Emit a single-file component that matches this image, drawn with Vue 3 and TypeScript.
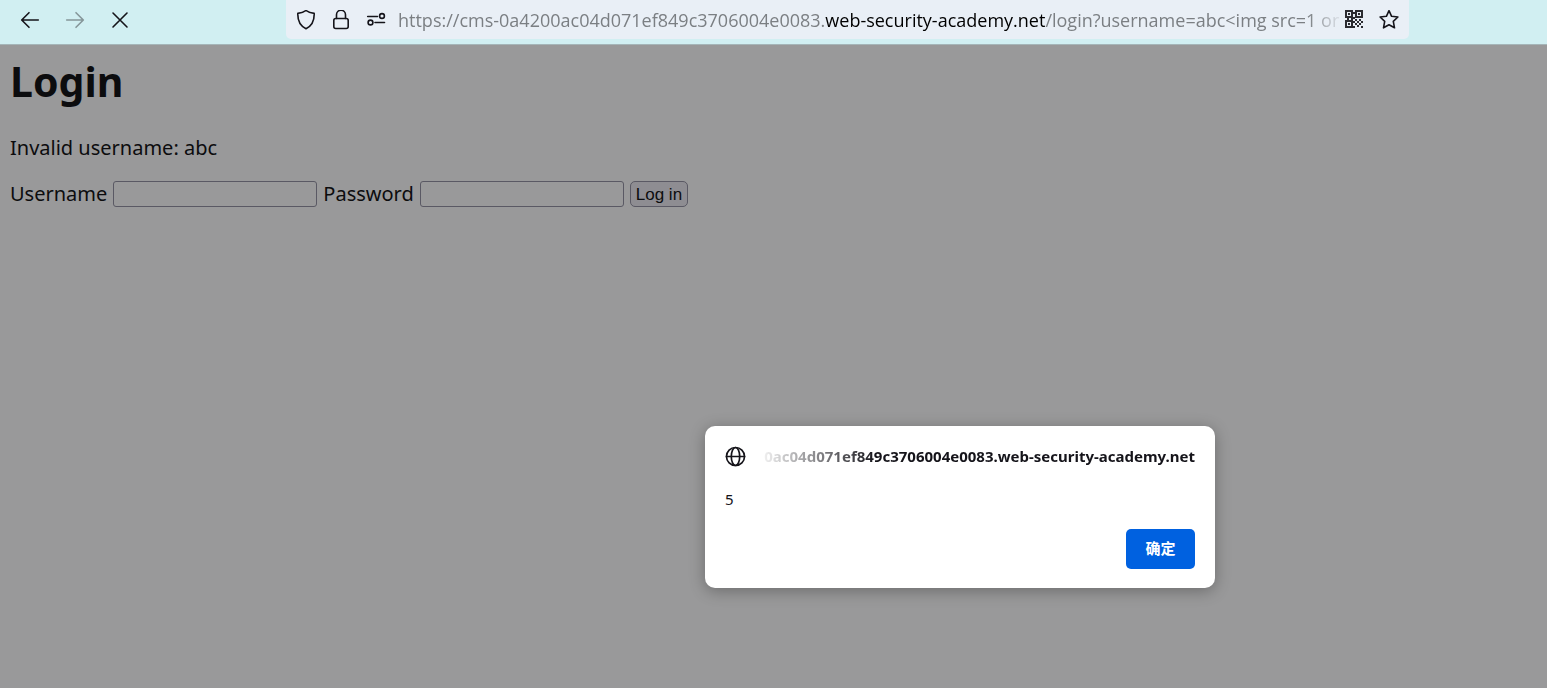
<script setup lang="ts">
import { ref } from 'vue'

const username = ref('')
const password = ref('')
const host = 'web-security-academy.net'
const subdomain = 'cms-0a4200ac04d071ef849c3706004e0083.'
const dialogOrigin = '0ac04d071ef849c3706004e0083.web-security-academy.net'
</script>

<template>
  <div class="browser">
    <header class="toolbar">
      <nav class="nav" aria-label="Navigation">
        <button type="button" aria-label="Back">
          <svg viewBox="0 0 20 20"><path d="M18.300 10H1.800M9 2.700 1.700 10 9 17.300" /></svg>
        </button>
        <button type="button" aria-label="Forward" disabled>
          <svg viewBox="0 0 20 20"><path d="M1.700 10H18.200M11 2.700 18.300 10 11 17.300" /></svg>
        </button>
        <button type="button" aria-label="Stop">
          <svg viewBox="0 0 20 20"><path d="M3 3 17 17M17 3 3 17" /></svg>
        </button>
      </nav>
      <div class="urlbar">
        <button type="button" aria-label="Tracking protection">
          <svg viewBox="0 0 20 20"><path d="M10 .5C12 2.100 15 3.200 18.200 3.400 18.400 10.100 16.500 15.600 10 18.700 3.500 15.600 1.600 10.100 1.800 3.400 5 3.200 8 2.100 10 .5Z" /></svg>
        </button>
        <button type="button" aria-label="Connection security">
          <svg viewBox="0 0 20 20"><rect x="2.800" y="8.500" width="14.400" height="10" rx="2" /><path d="M5.500 8.500V4.700a4.500 4.500 0 0 1 9 0v3.800" /></svg>
        </button>
        <button type="button" aria-label="Permissions">
          <svg viewBox="0 0 20 20"><circle cx="16" cy="6" r="2.400" /><circle cx="4.500" cy="12.500" r="2.400" /><path d="M1.700 6.500H11.500M9 12.500H18.500" /></svg>
        </button>
        <div class="address">https://{{ subdomain }}<span class="host">{{ host }}</span>/login?username=abc&lt;img src=1 or</div>
        <button type="button" aria-label="QR code">
          <svg class="solid" viewBox="0 0 20 20">
            <path fill-rule="evenodd" d="M1 0h8v8H1ZM3 2v4h4V2ZM11 0h8v8h-8ZM13 2v4h4V2ZM1 10h8v8H1ZM3 12v4h4v-4Z" />
            <path d="M4 3h2v2H4ZM14 3h2v2h-2ZM4 13h2v2H4ZM9 2h2v2H9ZM9 7h2v2H9ZM3 8h2v2H3ZM7 8h2v2H7ZM11 9h2v2h-2ZM15 9h2v2h-2ZM9 11h2v2H9ZM13 11h2v2h-2ZM17 11h2v2h-2ZM11 13h2v2h-2ZM15 13h2v2h-2ZM9 16h2v2H9ZM13 15h2v2h-2ZM17 16h2v2h-2Z" />
          </svg>
        </button>
        <button type="button" aria-label="Bookmark this page">
          <svg viewBox="0 0 20 20"><path d="M10 .7 12.600 6.300 18.900 7 14.300 11.300 15.500 17.800 10 14.700 4.500 17.800 5.700 11.300 1.100 7 7.400 6.300Z" /></svg>
        </button>
      </div>
    </header>

    <main class="page">
      <h1>Login</h1>
      <p>Invalid username: abc</p>
      <form @submit.prevent>
        <label for="username">Username</label>
        <input id="username" v-model="username" type="text" />
        <label for="password">Password</label>
        <input id="password" v-model="password" type="password" />
        <button type="submit">Log in</button>
      </form>
    </main>

    <section class="dialog" role="alertdialog" aria-labelledby="origin" aria-describedby="message">
      <div class="title">
        <svg viewBox="0 0 20 20"><circle cx="10" cy="10" r="8.600" /><ellipse cx="10" cy="10" rx="4" ry="8.600" /><path d="M1.400 10H18.600" /></svg>
        <div id="origin" class="origin">{{ dialogOrigin }}</div>
      </div>
      <p id="message">5</p>
      <button type="button">确定</button>
    </section>
  </div>
</template>

<style>
body {
  margin: 0;
}
</style>

<style scoped>
.browser {
  position: relative;
  display: flex;
  flex-direction: column;
  min-height: 100vh;
  background: #99999a;
  font-family: "Noto Sans", "Noto Sans CJK SC", sans-serif;
}

button {
  font-family: inherit;
}

svg {
  display: block;
  flex: none;
  width: 20px;
  height: 20px;
  fill: none;
  stroke: currentColor;
  stroke-width: 1.6;
  stroke-linecap: round;
  stroke-linejoin: round;
}

.solid {
  fill: #2b2b30;
  stroke: none;
}

.toolbar {
  display: flex;
  height: 44px;
  padding-right: 138px;
  border-bottom: 1px solid #a5b5b8;
  background: #d1eff2;
}

.nav {
  display: flex;
  flex: none;
  align-items: center;
  gap: 25px;
  box-sizing: border-box;
  width: 286px;
  height: 39px;
  padding-left: 20px;
}

.toolbar button {
  flex: none;
  padding: 0;
  border: 0;
  background: none;
  color: #15141a;
}

.toolbar button:disabled {
  color: #859699;
}

.urlbar {
  display: flex;
  flex: 1;
  align-items: center;
  gap: 15px;
  min-width: 0;
  height: 39px;
  padding: 0 10px;
  box-sizing: border-box;
  border-radius: 0 0 5px 5px;
  background: #e9eff6;
}

.address {
  flex: 1;
  min-width: 0;
  margin: 0 -15px 0 -3px;
  overflow: hidden;
  color: #7b7f83;
  font-family: "Open Sans", "Noto Sans", sans-serif;
  font-size: 18px;
  line-height: 38px;
  white-space: nowrap;
  mask-image: linear-gradient(to left, transparent, #000 36px);
}

.toolbar .address + button {
  margin-left: 0;
}

.host {
  color: #000;
}

.page {
  padding: 6px 10px;
  color: #0c0c0e;
  font-size: 20px;
  line-height: 28px;
}

h1 {
  margin: 0 0 23px;
  font-size: 41px;
  line-height: 60px;
}

p {
  margin: 0;
}

form {
  display: flex;
  flex-wrap: wrap;
  align-items: center;
  gap: 6px;
  margin-top: 18px;
}

form input {
  box-sizing: border-box;
  width: 204px;
  height: 26px;
  padding: 2px 4px;
  border: 1px solid #5a5964;
  border-radius: 3px;
  background: #99999a;
  font-size: 17px;
}

form button {
  height: 26px;
  padding: 2px 5px 0;
  border: 1px solid #5a5964;
  border-radius: 5px;
  background: #8e8d92;
  color: #0c0c0e;
  font-family: "Liberation Sans", sans-serif;
  font-size: 17px;
}

.dialog {
  position: absolute;
  top: 426px;
  right: 332px;
  display: flex;
  flex-direction: column;
  box-sizing: border-box;
  width: 510px;
  padding: 20px 20px 19px;
  border-radius: 10px;
  background: #fff;
  box-shadow: 0 3px 16px rgba(0, 0, 0, 0.3);
  color: #15141a;
  font-size: 15px;
  line-height: 22px;
}

.title {
  display: flex;
  align-items: center;
  gap: 10px;
  line-height: 21px;
}

.title svg {
  width: 21px;
  height: 21px;
}

.origin {
  display: flex;
  flex: 1;
  justify-content: flex-end;
  min-width: 0;
  overflow: hidden;
  font-weight: 700;
  white-space: nowrap;
  mask-image: linear-gradient(to right, transparent, #000 120px);
}

.dialog p {
  margin: 21px 0 19px;
}

.dialog button {
  align-self: flex-end;
  width: 69px;
  height: 40px;
  padding: 0 0 3px;
  border: 0;
  border-radius: 5px;
  background: #0061e0;
  color: #fff;
  font-size: 15px;
  font-weight: 700;
}
</style>
